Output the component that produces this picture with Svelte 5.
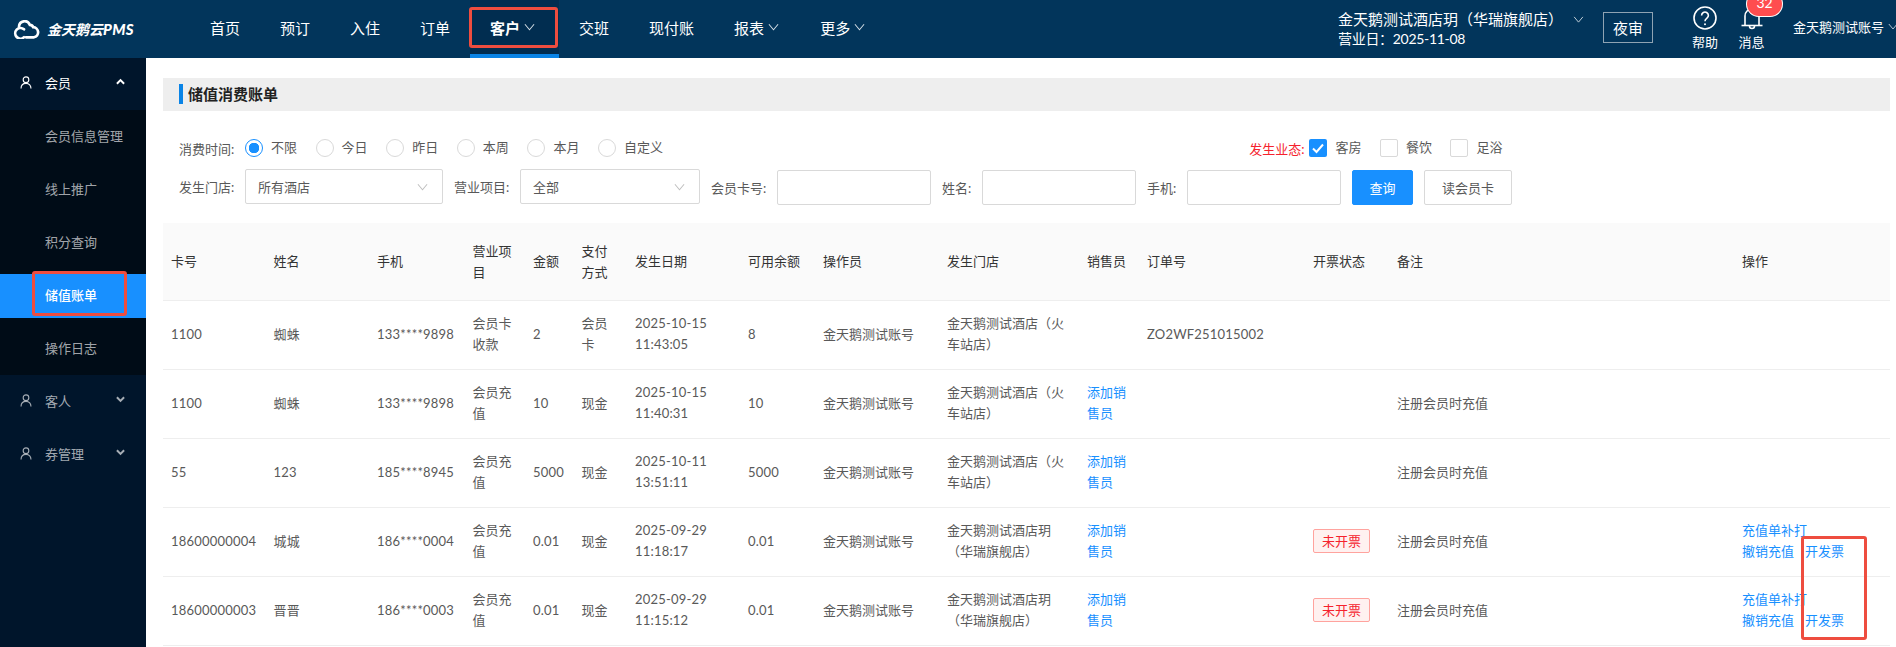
<script lang="ts">
  const nav = [
    { label: '首页' },
    { label: '预订' },
    { label: '入住' },
    { label: '订单' },
    { label: '客户', caret: true, active: true },
    { label: '交班' },
    { label: '现付账' },
    { label: '报表', caret: true },
    { label: '更多', caret: true }
  ];
  const subMenu = ['会员信息管理', '线上推广', '积分查询', '储值账单', '操作日志'];
  const times = ['不限', '今日', '昨日', '本周', '本月', '自定义'];
  const biz = [
    { label: '客房', on: true },
    { label: '餐饮', on: false },
    { label: '足浴', on: false }
  ];
  const columns = [
    ['卡号', 102.5], ['姓名', 103.5], ['手机', 95.5], ['营业项目', 60.5], ['金额', 48.5],
    ['支付方式', 53.5], ['发生日期', 113], ['可用余额', 75], ['操作员', 124], ['发生门店', 140],
    ['销售员', 60], ['订单号', 166], ['开票状态', 84], ['备注', 345], ['操作', 156]
  ];
  const storeA = '金天鹅测试酒店（火车站店）';
  const storeB = '金天鹅测试酒店玥（华瑞旗舰店）';
  const note = '注册会员时充值';
  const rows = [
    { card: '1100', name: '蜘蛛', phone: '133****9898', item: '会员卡收款', amount: '2', pay: '会员卡', date: '2025-10-15 11:43:05', left: '8', store: storeA, order: 'ZO2WF251015002' },
    { card: '1100', name: '蜘蛛', phone: '133****9898', item: '会员充值', amount: '10', pay: '现金', date: '2025-10-15 11:40:31', left: '10', store: storeA, seller: true, note },
    { card: '55', name: '123', phone: '185****8945', item: '会员充值', amount: '5000', pay: '现金', date: '2025-10-11 13:51:11', left: '5000', store: storeA, seller: true, note },
    { card: '18600000004', name: '城城', phone: '186****0004', item: '会员充值', amount: '0.01', pay: '现金', date: '2025-09-29 11:18:17', left: '0.01', store: storeB, seller: true, invoice: true, note },
    { card: '18600000003', name: '晋晋', phone: '186****0003', item: '会员充值', amount: '0.01', pay: '现金', date: '2025-09-29 11:15:12', left: '0.01', store: storeB, seller: true, invoice: true, note }
  ];
</script>

{#snippet chevron(cls)}
  <svg class={cls} viewBox="0 0 12 8" fill="none" stroke="currentColor" stroke-width="1.1"><path d="M1 1l5 6 5-6" /></svg>
{/snippet}

{#snippet person()}
  <svg class="person" viewBox="0 0 14 15" fill="none" stroke="currentColor" stroke-width="1.3">
    <circle cx="7" cy="4.2" r="3.3" />
    <path d="M1.2 14.5c0-3.6 2-6 5.8-6s5.8 2.4 5.8 6" />
  </svg>
{/snippet}

{#snippet bold(up)}
  <svg class="fold" viewBox="0 0 10 7" fill="none" stroke="currentColor" stroke-width="2.2">
    <path d={up ? 'M1 6l4-4 4 4' : 'M1 1l4 4 4-4'} />
  </svg>
{/snippet}

<div class="page">
  <header class="top">
    <div class="logo">
      <svg viewBox="0 0 29 19" fill="none" stroke="#fff" stroke-width="2.7" stroke-linecap="round">
        <path d="M13 17.3a5.3 5.3 0 1 1 0-8" />
        <path d="M8 6.5a5.6 5.6 0 0 1 10.8-1.7a3.6 3.6 0 0 1 3.4 2.4a5.1 5.1 0 0 1 .8 10.1h-8" />
      </svg>
      <span>金天鹅云<b>PMS</b></span>
    </div>
    <nav class="nav">
      {#each nav as item}
        <a class="nav-item" class:active={item.active}>
          {item.label}
          {#if item.caret}{@render chevron('caret')}{/if}
        </a>
      {/each}
    </nav>
    <div class="top-right">
      <div class="hotel">
        <div class="hotel-name">金天鹅测试酒店玥（华瑞旗舰店）{@render chevron('hotel-caret')}</div>
        <div class="biz-day">营业日：2025-11-08</div>
      </div>
      <button class="audit">夜审</button>
      <div class="tool help">
        <svg viewBox="0 0 24 24" fill="none" stroke="#fff" stroke-width="1.6">
          <circle cx="12" cy="12" r="11" />
          <path d="M8.6 9.4a3.4 3.4 0 1 1 5.2 2.9c-1.2.8-1.8 1.4-1.8 2.9" />
          <circle cx="12" cy="18.2" r="1" fill="#fff" stroke="none" />
        </svg>
        <span>帮助</span>
      </div>
      <div class="tool bell">
        <svg viewBox="0 0 24 24" fill="none" stroke="#fff" stroke-width="1.6">
          <path d="M5 19V10a7 7 0 0 1 14 0v9" />
          <path d="M1.5 19.5h21" />
          <path d="M9.5 20a2.5 2.5 0 0 0 5 0" />
        </svg>
        <em class="badge">32</em>
        <span>消息</span>
      </div>
      <div class="user">金天鹅测试账号{@render chevron('user-caret')}</div>
    </div>
  </header>

  <div class="body">
    <aside class="side">
      <div class="group open">{@render person()}<span>会员</span>{@render bold(true)}</div>
      <ul class="sub">
        {#each subMenu as item}
          <li class:current={item === '储值账单'}>{item}</li>
        {/each}
      </ul>
      <div class="group">{@render person()}<span>客人</span>{@render bold(false)}</div>
      <div class="group">{@render person()}<span>券管理</span>{@render bold(false)}</div>
    </aside>

    <main class="main">
      <h2 class="title"><span>储值消费账单</span></h2>

      <div class="line-one">
        <span class="label">消费时间:</span>
        <div class="radios">
          {#each times as t, i}
            <label class="radio"><i class:on={i === 0}></i>{t}</label>
          {/each}
        </div>
        <div class="biz">
          <span class="biz-label">发生业态:</span>
          {#each biz as b}
            <label class="check">
              <i class:on={b.on}>
                {#if b.on}<svg viewBox="0 0 18 18" fill="none" stroke="#fff" stroke-width="2"><path d="M4 9.5l3.5 3.5L14 5.5" /></svg>{/if}
              </i>{b.label}
            </label>
          {/each}
        </div>
      </div>

      <div class="line-two">
        <div class="field">
          <span class="label">发生门店:</span>
          <div class="select wide">所有酒店{@render chevron('select-caret')}</div>
        </div>
        <div class="field">
          <span class="label">营业项目:</span>
          <div class="select">全部{@render chevron('select-caret')}</div>
        </div>
        <div class="field">
          <span class="label">会员卡号:</span>
          <input class="input" />
        </div>
        <div class="field">
          <span class="label short">姓名:</span>
          <input class="input" />
        </div>
        <div class="field">
          <span class="label short">手机:</span>
          <input class="input" />
        </div>
        <button class="btn primary">查询</button>
        <button class="btn">读会员卡</button>
      </div>

      <table class="table">
        <colgroup>
          {#each columns as c}<col style:width="{c[1]}px" />{/each}
        </colgroup>
        <thead>
          <tr>{#each columns as c}<th>{c[0]}</th>{/each}</tr>
        </thead>
        <tbody>
          {#each rows as r}
            <tr>
              <td class="num">{r.card}</td>
              <td class="num">{r.name}</td>
              <td class="num">{r.phone}</td>
              <td>{r.item}</td>
              <td class="num">{r.amount}</td>
              <td>{r.pay}</td>
              <td class="num">{r.date}</td>
              <td class="num">{r.left}</td>
              <td>金天鹅测试账号</td>
              <td>{r.store}</td>
              <td>{#if r.seller}<a class="link">添加销售员</a>{/if}</td>
              <td class="num">{r.order ?? ''}</td>
              <td>{#if r.invoice}<span class="tag">未开票</span>{/if}</td>
              <td>{r.note ?? ''}</td>
              <td>
                {#if r.invoice}
                  <a class="link">充值单补打</a><br />
                  <a class="link">撤销充值</a><a class="link gap">开发票</a>
                {/if}
              </td>
            </tr>
          {/each}
        </tbody>
      </table>
    </main>
  </div>

  <!-- red annotation boxes drawn over the screenshot -->
  <div class="mark mark-nav"></div>
  <div class="mark mark-side"></div>
  <div class="mark mark-ops"></div>
</div>

<style>
  :global(body) {
    margin: 0;
    overflow: hidden;
  }
  .page {
    position: relative;
    width: 1896px;
    height: 647px;
    overflow: hidden;
    background: #fff;
    font-family: Lato, "Noto Sans CJK SC", sans-serif;
    font-size: 13px;
    color: #595959;
  }
  .top {
    display: grid;
    grid-template-columns: 190px 1148px auto;
    height: 58px;
    background: #02355b;
    color: #fff;
  }
  .logo {
    display: flex;
    align-items: center;
    gap: 7px;
    padding-left: 11px;
  }
  .logo svg {
    width: 29px;
    height: 19px;
  }
  .logo span {
    font-size: 14px;
    font-weight: 700;
    font-style: italic;
    white-space: nowrap;
  }
  .logo b {
    font-size: 15px;
    letter-spacing: 0.3px;
  }
  .nav {
    display: flex;
  }
  .nav-item {
    display: flex;
    align-items: center;
    height: 54px;
    padding: 0 20px;
    border-bottom: 4px solid transparent;
    font-size: 15px;
    white-space: nowrap;
  }
  .nav-item.active {
    padding-right: 23px;
    background: #012d50;
    border-bottom-color: #0a84e6;
    font-weight: 700;
  }
  .caret {
    width: 11px;
    height: 8px;
    margin-left: 4px;
    margin-right: 1px;
    color: #d3dde5;
  }
  .top-right {
    display: flex;
    white-space: nowrap;
  }
  .hotel {
    width: 265px;
    padding-top: 8px;
  }
  .hotel-name {
    display: flex;
    align-items: center;
    font-size: 15px;
    line-height: 22px;
  }
  .hotel-caret {
    width: 11px;
    height: 7px;
    margin-left: 10px;
    color: #c4d0da;
  }
  .biz-day {
    font-size: 14px;
    line-height: 20px;
    margin-top: -1px;
    letter-spacing: -0.3px;
  }
  .audit {
    align-self: flex-start;
    width: 50px;
    height: 31px;
    margin-top: 12px;
    padding: 0;
    border: 1px solid #8fa3b3;
    background: transparent;
    color: #fff;
    font: inherit;
    font-size: 15px;
  }
  .tool {
    position: relative;
    display: flex;
    flex-direction: column;
    align-items: center;
    padding-top: 6px;
  }
  .tool svg {
    width: 24px;
    height: 24px;
  }
  .tool span {
    margin-top: 2px;
    line-height: 20px;
  }
  .help {
    margin-left: 39px;
    width: 26px;
  }
  .bell {
    margin-left: 20px;
    width: 27px;
  }
  .badge {
    position: absolute;
    left: 9px;
    top: -8px;
    width: 35px;
    height: 24px;
    border-radius: 12px;
    background: #ff4d4f;
    box-shadow: 0 0 0 1px #fff;
    color: #fff;
    font-style: normal;
    font-size: 14px;
    line-height: 22px;
    text-align: center;
  }
  .user {
    display: flex;
    align-items: center;
    height: 52px;
    margin-left: 28px;
  }
  .user-caret {
    width: 10px;
    height: 7px;
    margin-left: 4px;
    flex: none;
    color: #c4d0da;
  }
  .body {
    display: flex;
    height: 589px;
  }
  .side {
    width: 146px;
    flex: none;
    background: #00152b;
    color: rgba(255, 255, 255, 0.65);
  }
  .group {
    display: flex;
    align-items: center;
    box-sizing: border-box;
    height: 52px;
    margin-bottom: 1px;
    padding: 0 21px 2px 20px;
  }
  .group.open {
    margin-bottom: 0;
    color: #fff;
    padding-bottom: 4px;
  }
  .group span {
    flex: 1;
    margin-left: 13px;
  }
  .person {
    width: 12px;
    height: 13px;
  }
  .fold {
    width: 9px;
    height: 7px;
    margin-top: -2px;
  }
  .sub {
    list-style: none;
    margin: 0;
    padding: 5px 0 4px;
    display: flex;
    flex-direction: column;
    gap: 9px;
    background: #000c17;
  }
  .sub li {
    height: 44px;
    line-height: 42px;
    padding-left: 45px;
  }
  .sub li.current {
    background: #1890ff;
    color: #fff;
    font-weight: 500;
  }
  .main {
    flex: 1;
    min-width: 0;
    padding: 20px 6px 0 17px;
  }
  .title {
    height: 33px;
    margin: 0;
    padding: 6px 0 0 16px;
    box-sizing: border-box;
    background: #eee;
    font-size: 15px;
    line-height: 21px;
    font-weight: 700;
    color: #222;
  }
  .title span {
    display: block;
    height: 20px;
    margin-left: 0;
    padding-left: 5px;
    border-left: 4px solid #0a84e6;
    line-height: 20px;
  }
  .line-one {
    display: flex;
    align-items: center;
    height: 18px;
    margin-top: 28px;
    padding-left: 16px;
  }
  .label {
    width: 66px;
    flex: none;
    white-space: nowrap;
  }
  .label.short {
    width: 40px;
  }
  .radios {
    display: flex;
    gap: 18.6px;
  }
  .radio,
  .check {
    display: flex;
    align-items: flex-start;
    gap: 8px;
    height: 18px;
    line-height: 16px;
  }
  .radio i {
    box-sizing: border-box;
    width: 18px;
    height: 18px;
    border: 1px solid #d9d9d9;
    border-radius: 50%;
  }
  .radio i.on {
    border-color: #1890ff;
    background: radial-gradient(circle, #1890ff 5px, #fff 5.5px);
  }
  .biz {
    display: flex;
    align-items: center;
    margin-left: auto;
    margin-right: 369px;
  }
  .biz-label {
    color: #f5222d;
    margin-right: 5px;
  }
  .check {
    margin-right: 18.5px;
  }
  .check i {
    box-sizing: border-box;
    width: 18px;
    height: 18px;
    border: 1px solid #d9d9d9;
    border-radius: 2px;
  }
  .check i.on {
    border: 0;
    background: #1890ff;
  }
  .check svg {
    display: block;
  }
  .line-two {
    display: flex;
    align-items: flex-start;
    gap: 11px;
    margin-top: 12px;
    padding-left: 16px;
  }
  .field {
    display: flex;
    align-items: center;
  }
  .select {
    display: flex;
    align-items: center;
    justify-content: space-between;
    box-sizing: border-box;
    width: 180px;
    height: 35px;
    padding: 0 14px 0 12px;
    border: 1px solid #d9d9d9;
    border-radius: 2px;
  }
  .select.wide {
    width: 198px;
  }
  .select-caret {
    width: 11px;
    height: 8px;
    color: #bfbfbf;
  }
  .input {
    box-sizing: border-box;
    width: 154px;
    height: 35px;
    margin-top: 1px;
    border: 1px solid #d9d9d9;
    border-radius: 2px;
  }
  .btn {
    box-sizing: border-box;
    width: 88px;
    height: 35px;
    margin: 1px 0 0;
    padding: 0;
    border: 1px solid #d9d9d9;
    border-radius: 2px;
    background: #fff;
    color: #595959;
    font: inherit;
  }
  .btn.primary {
    width: 61px;
    border-color: #1890ff;
    background: #1890ff;
    color: #fff;
  }
  .table {
    table-layout: fixed;
    width: 1727px;
    margin-top: 18px;
    border-collapse: collapse;
    line-height: 21px;
  }
  th {
    height: 77px;
    padding: 0 8px;
    background: #fafafa;
    border-bottom: 1px solid #eee;
    font-weight: 400;
    text-align: left;
    color: #333;
  }
  td {
    height: 68px;
    padding: 0 8px 2px;
    border-bottom: 1px solid #eee;
    box-sizing: border-box;
  }
  td.num {
    letter-spacing: 0.2px;
  }
  tbody tr {
    height: 69px;
  }
  .link {
    color: #1890ff;
  }
  .link.gap {
    margin-left: 11px;
  }
  .tag {
    display: inline-block;
    box-sizing: border-box;
    height: 24px;
    padding: 0 8px;
    border: 1px solid #ffa39e;
    border-radius: 2px;
    background: #fff1f0;
    color: #f5222d;
    line-height: 22px;
  }
  .mark {
    position: absolute;
    box-sizing: border-box;
    border: 3px solid #ee4d3f;
    border-radius: 3px;
  }
  .mark-nav {
    left: 469px;
    top: 7px;
    width: 89px;
    height: 41px;
  }
  .mark-side {
    left: 32px;
    top: 271px;
    width: 95px;
    height: 45px;
  }
  .mark-ops {
    left: 1801px;
    top: 536px;
    width: 66px;
    height: 104px;
  }
</style>
